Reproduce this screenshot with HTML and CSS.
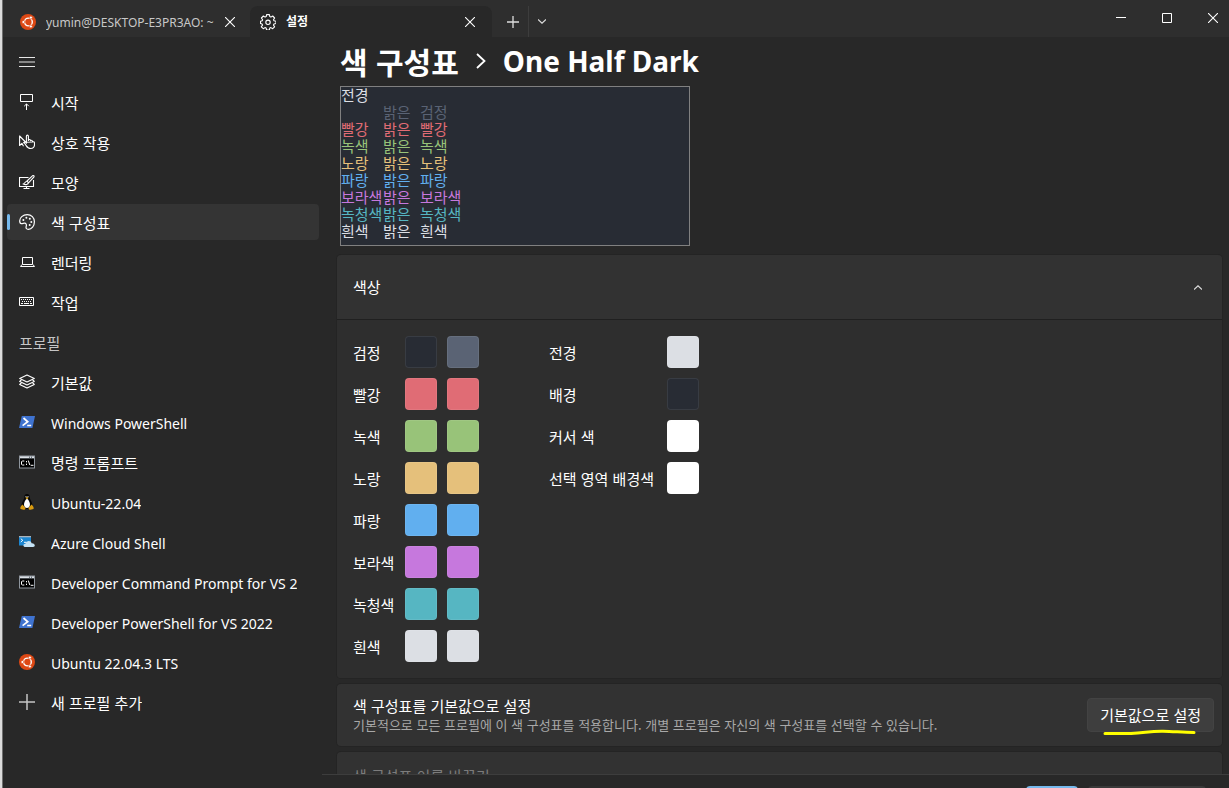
FILE: index.html
```
<!DOCTYPE html>
<html lang="ko">
<head>
    <meta charset="UTF-8">
    <meta name="viewport" content="width=device-width, initial-scale=1.0">
    <title>설정</title>
    <link rel="stylesheet" href="styles.css">
</head>
<body>
    <!-- Shared icons -->
    <svg class="sprite" aria-hidden="true">
        <symbol id="ubuntu" viewBox="0 0 16 16">
            <circle cx="8" cy="8" r="8" fill="#dd4814"/>
            <circle cx="8.4" cy="8" r="3.9" fill="none" stroke="#fff" stroke-width="1.4"/>
            <g fill="#fff" stroke="#dd4814" stroke-width=".7">
                <circle cx="3.4" cy="8" r="1.5"/>
                <circle cx="10.9" cy="3.6" r="1.5"/>
                <circle cx="10.9" cy="12.4" r="1.5"/>
            </g>
        </symbol>
        <symbol id="powershell" viewBox="0 0 16 16">
            <path d="M2.8 2H16l-2.6 12H0z" fill="#3f73d0"/>
            <path d="M4.5 4l4.2 3.8L3.6 11.6M8.2 11.5h4" fill="none" stroke="#fff" stroke-width="1.7"/>
        </symbol>
        <symbol id="cmd" viewBox="0 0 16 16">
            <path d="M0 1.5h16v13H0z" fill="#8e959d"/>
            <path d="M1 2.5h14V4H1z" fill="#dce1e6"/>
            <path d="M10 2.5h1V4h-1zM12 2.5h1V4h-1z" fill="#6c7680"/>
            <path d="M1 4.5h14v9H1z" fill="#000"/>
            <path d="M5.3 7H3.2L2.5 7.7v2.6l.7.7h2.1M7.5 7v1.3M7.5 9.7V11M9.3 6.5l1.5 4.5M11.7 11.3h2.8" fill="none" stroke="#fff" stroke-width="1"/>
        </symbol>
        <symbol id="close" viewBox="0 0 10 10">
            <path d="M0 0l10 10M10 0L0 10" fill="none" stroke="currentColor" stroke-width="1.1"/>
        </symbol>
    </svg>

    <div class="window">
        <!-- Title bar -->
        <header class="titlebar">
            <div class="tab">
                <svg class="icon"><use href="#ubuntu"/></svg>
                <button type="button" class="tab-title">yumin@DESKTOP-E3PR3AO: ~</button>
                <button type="button" class="tab-close" aria-label="탭 닫기"><svg width="10" height="10"><use href="#close"/></svg></button>
            </div>
            <div class="tab active">
                <svg class="icon" viewBox="0 0 16 16" fill="none" stroke="#fff" stroke-width="1.1" stroke-linejoin="round">
                    <path d="M6.6.6h2.8l.4 2 1.1.5 1.8-1.1 1.9 2-1.1 1.7.5 1.1 2 .4v2.3l-2 .5-.5 1.1 1.1 1.7-1.9 1.9-1.8-1.1-1.1.4-.4 2H6.6l-.5-2-1.1-.4-1.7 1.1-2-1.900 1.200-1.700L2 10 .5 9.500V7.200l1.700-.4.4-1.100L1.400 4l2-2 1.700 1.100 1.100-.5z"/>
                    <circle cx="8" cy="8.300" r="2.200"/>
                </svg>
                <button type="button" class="tab-title">설정</button>
                <button type="button" class="tab-close" aria-label="탭 닫기"><svg width="10" height="10"><use href="#close"/></svg></button>
            </div>
            <button type="button" class="new-tab" aria-label="새 탭">
                <svg width="12" height="12" viewBox="0 0 12 12" stroke="#ddd" stroke-width="1.300"><path d="M0 6h12M6 0v12"/></svg>
            </button>
            <button type="button" class="tab-menu" aria-label="새 탭 메뉴">
                <svg width="8" height="5" viewBox="0 0 8 5" fill="none" stroke="#ddd" stroke-width="1.200"><path d="M0 .5l4 3.700L8 .5"/></svg>
            </button>
            <div class="window-buttons">
                <button type="button" aria-label="최소화"><svg width="10" height="10" viewBox="0 0 10 10"><path d="M0 4h10v1H0z" fill="#fff"/></svg></button>
                <button type="button" aria-label="최대화"><svg width="10" height="10" viewBox="0 0 10 10"><path d="M.5.5h9v9h-9z" fill="none" stroke="#fff"/></svg></button>
                <button type="button" aria-label="닫기"><svg width="10" height="10"><use href="#close"/></svg></button>
            </div>
        </header>

        <div class="body">
            <!-- Navigation -->
            <nav class="sidebar">
                <button type="button" class="menu-toggle" aria-label="메뉴">
                    <svg class="icon" viewBox="0 0 16 16" stroke="#e6e6e6"><path d="M0 3.500h16M0 8h16M0 12.500h16"/></svg>
                </button>
                <a href="#" class="nav-item">
                    <svg class="icon" viewBox="0 0 16 16" fill="none" stroke="#fff"><path d="M1.500.5h12v7h-12zM7.500 16v-6M5.200 12.200l2.300-2.300 2.300 2.300"/></svg>
                    <span>시작</span>
                </a>
                <a href="#" class="nav-item">
                    <svg class="icon" viewBox="0 0 16 16" fill="none" stroke="#fff" stroke-width="1.100" stroke-linejoin="round">
                        <path d="M7 8.500L.6 2v9.500l2.300-2.200 1.600 3M4 8.800h2"/>
                        <path d="M7.400 9.800V2.200c0-1.400 2-1.400 2 0v4M9.400 7V5.700c1.800-.6 2 .2 2 1.300M11.400 7.200V6.400c1.800-.4 2 .5 2 1.300M13.400 8c1.600-.7 2.200.2 2.100 1.600v1c0 2.400-1.300 3.900-3.800 3.900-2.600 0-3.600-1.400-4.500-2.900L5.400 9c-.4-1.100.8-1.700 1.500-.7z"/>
                    </svg>
                    <span>상호 작용</span>
                </a>
                <a href="#" class="nav-item">
                    <svg class="icon" viewBox="0 0 16 16" fill="none" stroke="#fff" stroke-width="1.100">
                        <path d="M9.500 3.500h-9v9h14V6M7.500 12.500v2M4.500 14.500h6"/>
                        <path d="M8 7l5.400-5.200c1.100-.8 2.200.2 1.400 1.400L9.500 8.900zM8 7.200c-2 0-1.700 2.100-3.600 2.800 2.200 1.300 4.900.4 5.100-1.400"/>
                    </svg>
                    <span>모양</span>
                </a>
                <a href="#" class="nav-item selected" aria-current="page">
                    <svg class="icon" viewBox="0 0 16 16" fill="none" stroke="#fff" stroke-width="1.200">
                        <path d="M.8 8C0 3.500 4.300.6 8.200.6c4.200 0 7.200 3.200 7.200 7.200 0 4.300-2.700 7.600-6 7.600-2 0-2.700-1.300-2.200-3 .6-1.900-.2-3.500-2-3.200-1.700.3-3.800 1.500-4.400-1.200z"/>
                        <g fill="#fff" stroke="none"><circle cx="4.400" cy="5.900" r="1"/><circle cx="7.400" cy="3.800" r="1"/><circle cx="10.800" cy="4.800" r="1"/><circle cx="12.300" cy="7.900" r="1"/><circle cx="10.700" cy="11" r="1"/></g>
                    </svg>
                    <span>색 구성표</span>
                </a>
                <a href="#" class="nav-item">
                    <svg class="icon" viewBox="0 0 16 16" fill="none" stroke="#fff"><path d="M3.500 3.500h10v7h-10zM3 10.500l-1.500 2h14l-1.500-2"/></svg>
                    <span>렌더링</span>
                </a>
                <a href="#" class="nav-item">
                    <svg class="icon" viewBox="0 0 16 16" fill="none" stroke="#fff"><path d="M.5 3.500h14v8H.5z"/><path d="M2 5.500h11M3 7.500h10" stroke-dasharray="1 1"/><path d="M2 9.500h2M5 9.500h5M11 9.500h2"/></svg>
                    <span>작업</span>
                </a>
                <h2 class="nav-heading">프로필</h2>
                <a href="#" class="nav-item">
                    <svg class="icon" viewBox="0 0 16 16" fill="none" stroke="#fff" stroke-width="1.100" stroke-linejoin="round">
                        <path d="M8 1l7.300 3.500L8 8 .7 4.500zM2.500 5.700L.7 7.500 8 11l7.300-3.500-1.800-1.800M2.500 8.700L.7 10.500 8 14l7.300-3.500-1.800-1.800"/>
                    </svg>
                    <span>기본값</span>
                </a>
                <a href="#" class="nav-item latin"><svg class="icon"><use href="#powershell"/></svg><span>Windows PowerShell</span></a>
                <a href="#" class="nav-item"><svg class="icon"><use href="#cmd"/></svg><span>명령 프롬프트</span></a>
                <a href="#" class="nav-item latin">
                    <svg class="icon" viewBox="0 0 16 16">
                        <path d="M8 0c2 0 2.700 1.300 2.700 3.500 0 2 2.800 4.500 2.800 8.500 0 2-2 3-5.500 3s-5.500-1-5.500-3c0-4 2.800-6.500 2.800-8.500C5.300 1.300 6 0 8 0z" fill="#080808"/>
                        <path d="M8 5c1.300 0 2 2 2.600 3.500.8 2 .4 5.500-2.600 5.500s-3.400-3.500-2.600-5.500C6 7 6.700 5 8 5z" fill="#fff"/>
                        <path d="M6.500 3.800L8 3l1.500.8L8 5.200z" fill="#e8a90e"/>
                        <circle cx="7" cy="2.700" r=".6" fill="#ddd"/><circle cx="9" cy="2.700" r=".6" fill="#ddd"/>
                        <path d="M3.500 10.500l3 3.500c0 1.500-1 2-2 1.700L1.500 15c-.5-1 0-3 2-4.500zM12.500 10.500l-3 3.500c0 1.500 1 2 2 1.700l3-.7c.5-1 0-3-2-4.500z" fill="#d99b10"/>
                    </svg>
                    <span>Ubuntu-22.04</span>
                </a>
                <a href="#" class="nav-item latin">
                    <svg class="icon" viewBox="0 0 16 16">
                        <path d="M0 2h12v9.500H0z" fill="#1c86d1"/>
                        <path d="M0 2h12v1.300H0z" fill="#aab3bb"/>
                        <path d="M1.800 4.700l2 1.600-2 1.700M5 8.300h2.500" fill="none" stroke="#fff" stroke-width="1"/>
                        <path d="M6.500 13C3.500 13 4 9.700 6.500 9.800 7.300 6.300 12 6 12.600 9.300 16 9 17 13 14 13z" fill="#c5e3f5"/>
                    </svg>
                    <span>Azure Cloud Shell</span>
                </a>
                <a href="#" class="nav-item latin"><svg class="icon"><use href="#cmd"/></svg><span>Developer Command Prompt for VS 2022</span></a>
                <a href="#" class="nav-item latin"><svg class="icon"><use href="#powershell"/></svg><span>Developer PowerShell for VS 2022</span></a>
                <a href="#" class="nav-item latin"><svg class="icon"><use href="#ubuntu"/></svg><span>Ubuntu 22.04.3 LTS</span></a>
                <a href="#" class="nav-item">
                    <svg class="icon" viewBox="0 0 16 16" stroke="#c4c4c4" stroke-width="1.500"><path d="M0 8h16M8 0v16"/></svg>
                    <span>새 프로필 추가</span>
                </a>
            </nav>

            <main class="content">
                <div class="scroll">
                    <h1 class="breadcrumb">
                        <a href="#">색 구성표</a>
                        <svg width="10" height="16" viewBox="0 0 10 16" fill="none" stroke="#fff" stroke-width="1.800"><path d="M1 1l7.500 7L1 15"/></svg>
                        <span class="scheme-name">One Half Dark</span>
                    </h1>

                    <!-- Terminal preview -->
                    <div class="preview">
                        <div class="line white"><span>전경</span></div>
                        <div class="line bright-black"><span></span><span>밝은</span><span>검정</span></div>
                        <div class="line red"><span>빨강</span><span>밝은</span><span>빨강</span></div>
                        <div class="line green"><span>녹색</span><span>밝은</span><span>녹색</span></div>
                        <div class="line yellow"><span>노랑</span><span>밝은</span><span>노랑</span></div>
                        <div class="line blue"><span>파랑</span><span>밝은</span><span>파랑</span></div>
                        <div class="line purple"><span>보라색</span><span>밝은</span><span>보라색</span></div>
                        <div class="line cyan"><span>녹청색</span><span>밝은</span><span>녹청색</span></div>
                        <div class="line white"><span>흰색</span><span>밝은</span><span>흰색</span></div>
                    </div>

                    <section class="card">
                        <button type="button" class="card-header" aria-expanded="true">
                            <span>색상</span>
                            <svg width="8" height="5" viewBox="0 0 8 5" fill="none" stroke="#ddd" stroke-width="1.200"><path d="M0 4.500L4 .8l4 3.700"/></svg>
                        </button>
                        <div class="card-body">
                            <div class="colors pairs">
                                <span>검정</span><button type="button" class="swatch black" aria-label="검정"></button><button type="button" class="swatch bright-black" aria-label="밝은 검정"></button>
                                <span>빨강</span><button type="button" class="swatch red" aria-label="빨강"></button><button type="button" class="swatch red" aria-label="밝은 빨강"></button>
                                <span>녹색</span><button type="button" class="swatch green" aria-label="녹색"></button><button type="button" class="swatch green" aria-label="밝은 녹색"></button>
                                <span>노랑</span><button type="button" class="swatch yellow" aria-label="노랑"></button><button type="button" class="swatch yellow" aria-label="밝은 노랑"></button>
                                <span>파랑</span><button type="button" class="swatch blue" aria-label="파랑"></button><button type="button" class="swatch blue" aria-label="밝은 파랑"></button>
                                <span>보라색</span><button type="button" class="swatch purple" aria-label="보라색"></button><button type="button" class="swatch purple" aria-label="밝은 보라색"></button>
                                <span>녹청색</span><button type="button" class="swatch cyan" aria-label="녹청색"></button><button type="button" class="swatch cyan" aria-label="밝은 녹청색"></button>
                                <span>흰색</span><button type="button" class="swatch white" aria-label="흰색"></button><button type="button" class="swatch white" aria-label="밝은 흰색"></button>
                            </div>
                            <div class="colors singles">
                                <span>전경</span><button type="button" class="swatch white" aria-label="전경"></button>
                                <span>배경</span><button type="button" class="swatch black" aria-label="배경"></button>
                                <span>커서 색</span><button type="button" class="swatch pure-white" aria-label="커서 색"></button>
                                <span>선택 영역 배경색</span><button type="button" class="swatch pure-white" aria-label="선택 영역 배경색"></button>
                            </div>
                        </div>
                    </section>

                    <section class="card setting">
                        <div>
                            <h3>색 구성표를 기본값으로 설정</h3>
                            <p>기본적으로 모든 프로필에 이 색 구성표를 적용합니다. 개별 프로필은 자신의 색 구성표를 선택할 수 있습니다.</p>
                        </div>
                        <div class="marked">
                            <button type="button" class="button">기본값으로 설정</button>
                            <svg class="marker" width="94" height="8" viewBox="0 0 94 8" fill="none" stroke="#ff0" stroke-width="3" stroke-linecap="round"><path d="M2 5.500h26C42 5 46 3 60 3.200c12 .3 20 1.300 31 1.300"/></svg>
                        </div>
                    </section>

                    <section class="card setting disabled">
                        <h3>색 구성표 이름 바꾸기</h3>
                    </section>
                </div>

                <footer class="actions">
                    <button type="button" class="save" aria-label="저장"></button>
                    <button type="button" class="discard" aria-label="변경 내용 취소"></button>
                </footer>
            </main>
        </div>
    </div>
</body>
</html>
```
FILE: styles.css
```
* {
    box-sizing: border-box;
}
body {
    margin: 0;
    background-color: #282828;
    color: #fff;
    font-family: "Noto Sans CJK KR", "Noto Sans", sans-serif;
    font-size: 15px;
    line-height: 20px;
}
button {
    padding: 0;
    border: none;
    background: none;
    color: inherit;
    font: inherit;
}
a {
    color: inherit;
    text-decoration: none;
}
h1, h2, h3, p {
    margin: 0;
    font-size: 15px;
    font-weight: normal;
}
svg {
    display: block;
    flex-shrink: 0;
}
.sprite {
    display: none;
}
.icon {
    width: 16px;
    height: 16px;
}
.window {
    display: flex;
    flex-direction: column;
    height: 100vh;
    border-left: 2px solid #dcdcdc;
    box-shadow: inset 1px 0 #707070;
    overflow: hidden;
}

/* Title bar */
.titlebar {
    display: flex;
    align-items: flex-end;
    height: 37px;
    margin-left: 1px;
    background-color: #2e2e2e;
}
.tab {
    display: flex;
    align-items: center;
    width: 242px;
    height: 31px;
    padding: 0 17px 0 10px;
    border-radius: 8px 8px 0 0;
}
.tab.active {
    background-color: #282828;
    font-weight: bold;
}
.tab:first-child {
    width: 247px;
    padding: 0 15px 0 17px;
}
.tab-title {
    flex: 1;
    overflow: hidden;
    margin: 0 8px 0 10px;
    padding-top: 2px;
    color: #c8c8c8;
    font-family: "Noto Sans", "Noto Sans CJK KR", sans-serif;
    font-size: 12px;
    text-align: left;
    white-space: nowrap;
}
.active .tab-title {
    padding-top: 0;
    color: #fff;
}
.new-tab,
.tab-menu {
    display: flex;
    align-items: center;
    justify-content: center;
    height: 31px;
}
.new-tab {
    width: 37px;
    padding-left: 6px;
    border-right: 1px solid #3d3d3d;
}
.tab-menu {
    width: 26px;
}
.window-buttons {
    display: flex;
    align-self: flex-start;
    margin-left: auto;
    margin-right: -7px;
}
.window-buttons button {
    display: flex;
    align-items: center;
    justify-content: center;
    width: 46px;
    height: 36px;
}

/* Navigation */
.body {
    display: flex;
    flex: 1;
    min-height: 0;
}
.sidebar {
    display: flex;
    flex-direction: column;
    gap: 4px;
    width: 321px;
    flex-shrink: 0;
    padding: 7px 4px 0 5px;
}
.menu-toggle {
    display: flex;
    align-items: center;
    height: 36px;
    padding-left: 12px;
}
.nav-item,
.nav-heading {
    display: flex;
    align-items: center;
    height: 36px;
    padding: 2px 22px 0 12px;
    border-radius: 4px;
}
.nav-item {
    position: relative;
    gap: 16px;
}
.nav-item .icon {
    margin-bottom: 2px;
}
.nav-item span {
    overflow: hidden;
    white-space: nowrap;
}
.nav-item.latin {
    padding-top: 4px;
    font-family: "Noto Sans", sans-serif;
    font-size: 14px;
}
.nav-item.latin .icon {
    margin-bottom: 4px;
}
.nav-item.selected {
    background-color: #343434;
}
.nav-item.selected::before {
    content: "";
    position: absolute;
    left: 0;
    top: 10px;
    width: 3px;
    height: 16px;
    border-radius: 2px;
    background-color: #76b9ed;
}
.nav-heading {
    color: #c5c5c5;
}

/* Content */
.content {
    display: flex;
    flex: 1;
    flex-direction: column;
    min-width: 0;
}
.scroll {
    flex: 1;
    min-height: 0;
    padding: 4px 7px 0 14px;
    overflow: hidden;
}
.breadcrumb {
    display: flex;
    align-items: center;
    gap: 17px;
    height: 40px;
    padding-left: 3px;
    font-size: 30px;
    font-weight: bold;
    line-height: 40px;
}
.scheme-name {
    font-family: "Noto Sans", sans-serif;
    font-size: 28px;
}
.preview {
    width: 350px;
    height: 160px;
    margin: 5px 0 9px 3px;
    border: 1px solid #808080;
    background-color: #282c34;
    line-height: 15px;
}
.line {
    display: grid;
    grid-template-columns: 42px 37px auto;
    justify-content: start;
    height: 17px;
    white-space: nowrap;
}
.card {
    margin-bottom: 6px;
    border-radius: 4px;
    background-color: #323232;
    box-shadow: 0 0 0 1px #242424;
}
.card-header {
    display: flex;
    align-items: center;
    justify-content: space-between;
    width: 100%;
    height: 65px;
    padding: 0 20px 0 16px;
    border-bottom: 1px solid #202020;
}
.card-body {
    display: flex;
    gap: 70px;
    padding: 16px;
    border-radius: 0 0 4px 4px;
    background-color: #2e2e2e;
}
.colors {
    display: grid;
    gap: 10px;
    align-items: center;
    align-content: start;
    white-space: nowrap;
}
.colors span {
    padding-top: 2px;
}
.pairs {
    grid-template-columns: 42px 32px 32px;
}
.singles {
    grid-template-columns: 108px 32px;
}
.swatch {
    height: 32px;
    border: 1px solid rgba(255, 255, 255, 0.08);
    border-radius: 4px;
    background-color: currentColor;
}
.black { color: #282c34; }
.bright-black { color: #5a6374; }
.red { color: #e06c75; }
.green { color: #98c379; }
.yellow { color: #e5c07b; }
.blue { color: #61afef; }
.purple { color: #c678dd; }
.cyan { color: #56b6c2; }
.white { color: #dcdfe4; }
.pure-white { color: #fff; }

.setting {
    display: flex;
    align-items: center;
    justify-content: space-between;
    height: 62px;
    padding: 0 8px 0 16px;
}
.setting p {
    color: #a8a8a8;
    font-size: 13px;
    line-height: 18px;
}
.setting.disabled {
    align-items: flex-start;
    padding-top: 14px;
    color: #7c7c7c;
}
.marked {
    position: relative;
}
.button {
    height: 34px;
    padding: 0 12px;
    border: 1px solid #434343;
    border-radius: 4px;
    background-color: #3e3e3e;
}
.marker {
    position: absolute;
    left: 16px;
    bottom: -4px;
}

/* Save bar, cut off by the window edge */
.actions {
    display: flex;
    align-items: flex-start;
    justify-content: flex-end;
    gap: 10px;
    height: 14px;
    margin-left: -1px;
    padding: 11px 23px 0 0;
    border-top: 1px solid #3d3d3d;
    background-color: #282828;
    overflow: hidden;
}
.actions button {
    height: 32px;
    border-radius: 4px;
}
.save {
    width: 52px;
    background-color: #76b9ed;
}
.discard {
    width: 118px;
    background-color: #3a3a3a;
}
```
